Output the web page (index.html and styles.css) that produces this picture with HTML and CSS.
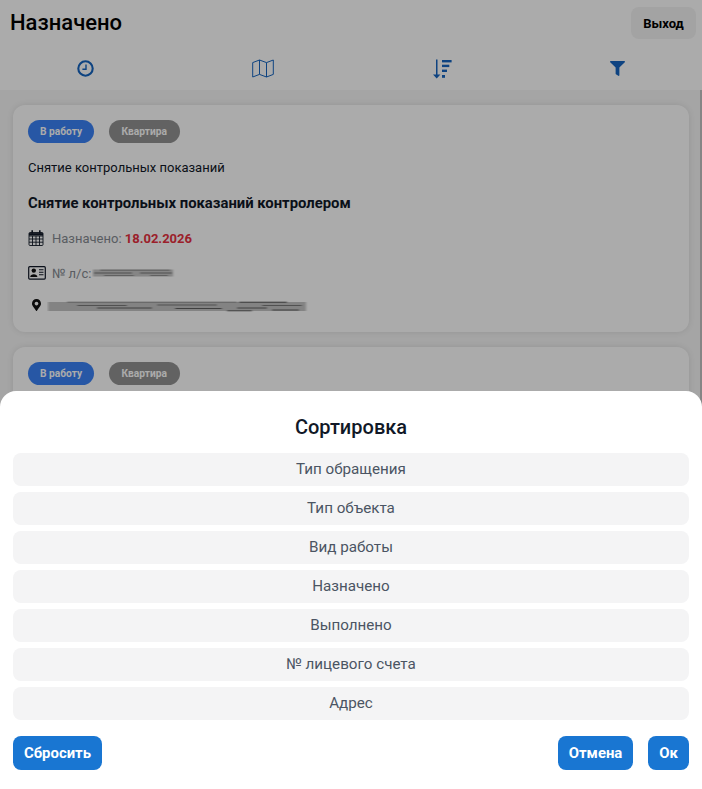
FILE: index.html
```html
<!DOCTYPE html>
<html lang="ru">
<head>
    <meta charset="UTF-8">
    <title>Назначено</title>
    <link rel="stylesheet" href="styles.css">
</head>
<body>
    <div class="page">
        <header class="top">
            <h1 class="title">Назначено</h1>
            <button class="logout">Выход</button>
        </header>
        <nav class="tools">
            <svg width="17" height="17" viewBox="0 0 17 17" fill="none" stroke="#1565c0"><circle cx="8.5" cy="8.5" r="7.2" stroke-width="2.1"/><path d="M9 4.5V9.2H5.4" stroke-width="1.4"/></svg>
            <svg width="22" height="19" viewBox="0 0 22 19" fill="none" stroke="#1565c0" stroke-width="1" stroke-linejoin="round"><path d="M.7 3.6 7.5 1 14.5 3.6 21.3 1V15.4L14.5 18 7.5 15.4 .7 18Z"/><path d="M7.5 1V15.4M14.5 3.6V18"/></svg>
            <svg width="19" height="20" viewBox="0 0 19 20" fill="#1565c0"><path d="M3 .5H4.5V15.6H7.4L3.7 19.4 0 15.6H3Z"/><rect x="9" y="1" width="9.6" height="2.4"/><rect x="9" y="5.7" width="7.3" height="2.4"/><rect x="9" y="10.6" width="5" height="2.4"/><rect x="9" y="16" width="3" height="2.8"/></svg>
            <svg width="15" height="15" viewBox="0 0 512 512" fill="#1565c0"><path d="M487.976 0H24.028C2.71 0-8.047 25.866 7.058 40.971L192 225.941V432c0 7.831 3.821 15.17 10.237 19.662l80 55.98C298.02 518.69 320 507.493 320 487.98V225.941l184.947-184.97C520.021 25.896 509.338 0 487.976 0z"/></svg>
        </nav>
        <main class="list">
            <section class="card">
                <div class="tags">
                    <span class="tag tag-blue">В работу</span>
                    <span class="tag tag-gray">Квартира</span>
                </div>
                <p class="kind">Снятие контрольных показаний</p>
                <h2 class="name">Снятие контрольных показаний контролером</h2>
                <div class="row row-date">
                    <svg class="row-icon" width="16" height="16" viewBox="0 0 16 16" fill="none" stroke="#111827" stroke-width=".9"><rect x="1" y="2.5" width="14" height="13" rx="1"/><path d="M1 6H15M1 9H15M1 12.2H15M4.5 6V15.5M8 6V15.5M11.5 6V15.5"/><path d="M1 4.3H15" stroke-width="2.4"/><path d="M4.2 .3V3.5M11.8 .3V3.5" stroke-width="1.6"/></svg>
                    <span>Назначено: <b class="date">18.02.2026</b></span>
                </div>
                <div class="row">
                    <svg class="row-icon" width="18" height="14" viewBox="0 0 18 14" fill="none" stroke="#111827"><rect x=".7" y=".7" width="16.6" height="12.4" rx="1" stroke-width="1.2"/><circle cx="5.8" cy="4.6" r="2.2" fill="#111" stroke="none"/><path d="M2.2 11C2.2 7.4 9.4 7.4 9.4 11Z" fill="#111" stroke="none"/><path d="M11 3.8H15.5M11 6.3H15.5M11 8.8H15.5" stroke-width="1.1"/></svg>
                    <span>№ л/с:</span>
                    <svg class="smear smear-short" width="84" height="10" viewBox="0 0 84 10">
                        <g filter="url(#smudge)">
                            <rect x="1" y="1.5" width="80" height="7" fill="#c6c6c6"/>
                            <path d="M8 2.2H78" stroke="#8a8a8a"/>
                            <path d="M2 5H40M48 5H80" stroke="#777"/>
                            <path d="M12 7.5H42M58 7.5H76" stroke="#8f8f8f"/>
                        </g>
                    </svg>
                </div>
                <div class="row row-address">
                    <svg class="pin" width="9" height="12" viewBox="0 0 384 512" fill="#111"><path d="M172.268 501.67C26.97 291.031 0 269.413 0 192 0 85.961 85.961 0 192 0s192 85.961 192 192c0 77.413-26.97 99.031-172.268 309.67-9.535 13.774-29.93 13.773-39.464 0zM192 272c44.183 0 80-35.817 80-80s-35.817-80-80-80-80 35.817-80 80 35.817 80 80 80z"/></svg>
                    <svg class="smear smear-long" width="262" height="13" viewBox="0 0 262 13">
                        <defs>
                            <filter id="smudge" filterUnits="userSpaceOnUse" x="-6" y="-6" width="280" height="26"><feGaussianBlur stdDeviation="1.1 .6"/></filter>
                        </defs>
                        <g filter="url(#smudge)">
                            <rect x="1" y="2" width="258" height="9" fill="#c4c4c4"/>
                            <path d="M20 2.2H190" stroke="#8f8f8f"/>
                            <path d="M192 2.2H240" stroke="#333" stroke-width=".8"/>
                            <path d="M30 5.5H80M110 5H170M215 5.5H255" stroke="#7a7a7a"/>
                            <path d="M50 8H105M128 8.5H175M190 8H220" stroke="#555" stroke-width=".9"/>
                            <path d="M180 10.8H205M225 10H252" stroke="#444" stroke-width=".8"/>
                        </g>
                    </svg>
                </div>
            </section>
            <section class="card">
                <div class="tags">
                    <span class="tag tag-blue">В работу</span>
                    <span class="tag tag-gray">Квартира</span>
                </div>
            </section>
        </main>
        <div class="scrollbar"></div>
        <div class="overlay"></div>
        <div class="sheet">
            <h3 class="sheet-title">Сортировка</h3>
            <ul class="options">
                <li>Тип обращения</li>
                <li>Тип объекта</li>
                <li>Вид работы</li>
                <li>Назначено</li>
                <li>Выполнено</li>
                <li>№ лицевого счета</li>
                <li>Адрес</li>
            </ul>
            <div class="actions">
                <button class="btn">Сбросить</button>
                <div class="actions-right">
                    <button class="btn">Отмена</button>
                    <button class="btn">Ок</button>
                </div>
            </div>
        </div>
    </div>
</body>
</html>
```
FILE: styles.css
```css
body,p,h1,h2,h3,ul{
    margin:0;
}
ul{
    padding-left:0;
    list-style-type:none;
}
button{
    border:none;
    font-family:inherit;
}
body{
    font-family:Roboto,"Liberation Sans",sans-serif;
    background:#f6f6f6;
}
.page{
    position:relative;
    width:702px;
    height:789px;
    overflow:hidden;
}
/* шапка */
.top{
    display:flex;
    justify-content:space-between;
    align-items:center;
    height:46px;
    padding:0 6px 0 10px;
    background:#fff;
}
.title{
    margin-bottom:2px;
    font-size:22px;
    font-weight:500;
    color:#000;
}
.logout{
    width:65px;
    height:32px;
    background:#f3f3f3;
    border-radius:8px;
    font-size:13px;
    font-weight:700;
    color:#000;
}
.tools{
    display:flex;
    justify-content:space-between;
    align-items:center;
    height:44px;
    padding:1px 77px 0;
    box-sizing:border-box;
    background:#fff;
}
/* список */
.list{
    display:flex;
    flex-direction:column;
    gap:15px;
    padding:15px 13px;
}
.card{
    height:227px;
    padding:15px;
    box-sizing:border-box;
    background:#fff;
    border-radius:12px;
    box-shadow:0 0 6px rgba(0,0,0,.1);
}
.tags{
    display:flex;
    gap:14.5px;
}
.tag{
    height:23px;
    line-height:23px;
    border-radius:12px;
    font-size:10.2px;
    font-weight:700;
}
.tag-blue{
    background:#3b82f6;
    color:#fff;
    padding:0 12px;
}
.tag-gray{
    background:#939393;
    color:#fff;
    padding:0 13px;
}
.kind{
    margin-top:17px;
    font-size:13px;
    line-height:16px;
    color:#111827;
}
.name{
    margin-top:18px;
    font-size:14.85px;
    line-height:18px;
    font-weight:700;
    color:#111827;
}
.row{
    display:flex;
    align-items:center;
    gap:6px;
    height:18px;
    margin-top:17px;
    font-size:13px;
    color:#868b92;
}
.row-icon{
    flex:none;
}
.row-date{
    gap:8px;
}
.date{
    color:#e8303f;
}
.row-address{
    margin-top:15px;
    gap:6px;
}
.pin{
    margin:0 0 3px 4px;
}
.smear{
    display:block;
}
.smear-short{
    margin-left:-5px;
}
.smear-long{
    margin-top:1px;
}
.scrollbar{
    position:absolute;
    top:90px;
    right:0;
    width:2px;
    height:320px;
    background:#c6c6c6;
}
/* затемнение и нижняя панель */
.overlay{
    position:absolute;
    inset:0;
    background:rgba(0,0,0,.33);
}
.sheet{
    position:absolute;
    left:0;
    right:0;
    bottom:0;
    height:398px;
    padding:0 13px;
    box-sizing:border-box;
    background:#fff;
    border-radius:16px 16px 0 0;
}
.sheet-title{
    margin-top:24px;
    font-size:20px;
    line-height:24px;
    font-weight:500;
    text-align:center;
    color:#111827;
}
.options{
    display:flex;
    flex-direction:column;
    gap:6px;
    margin-top:14px;
}
.options li{
    height:33px;
    line-height:33px;
    text-align:center;
    background:#f4f4f5;
    border-radius:8px;
    font-size:15.2px;
    color:#4b5563;
}
.actions{
    display:flex;
    justify-content:space-between;
    margin-top:16px;
}
.actions-right{
    display:flex;
    gap:15px;
}
.btn{
    height:34px;
    padding:0 11px;
    background:#1976d2;
    border-radius:8px;
    font-size:14.9px;
    font-weight:700;
    color:#fff;
}
```
